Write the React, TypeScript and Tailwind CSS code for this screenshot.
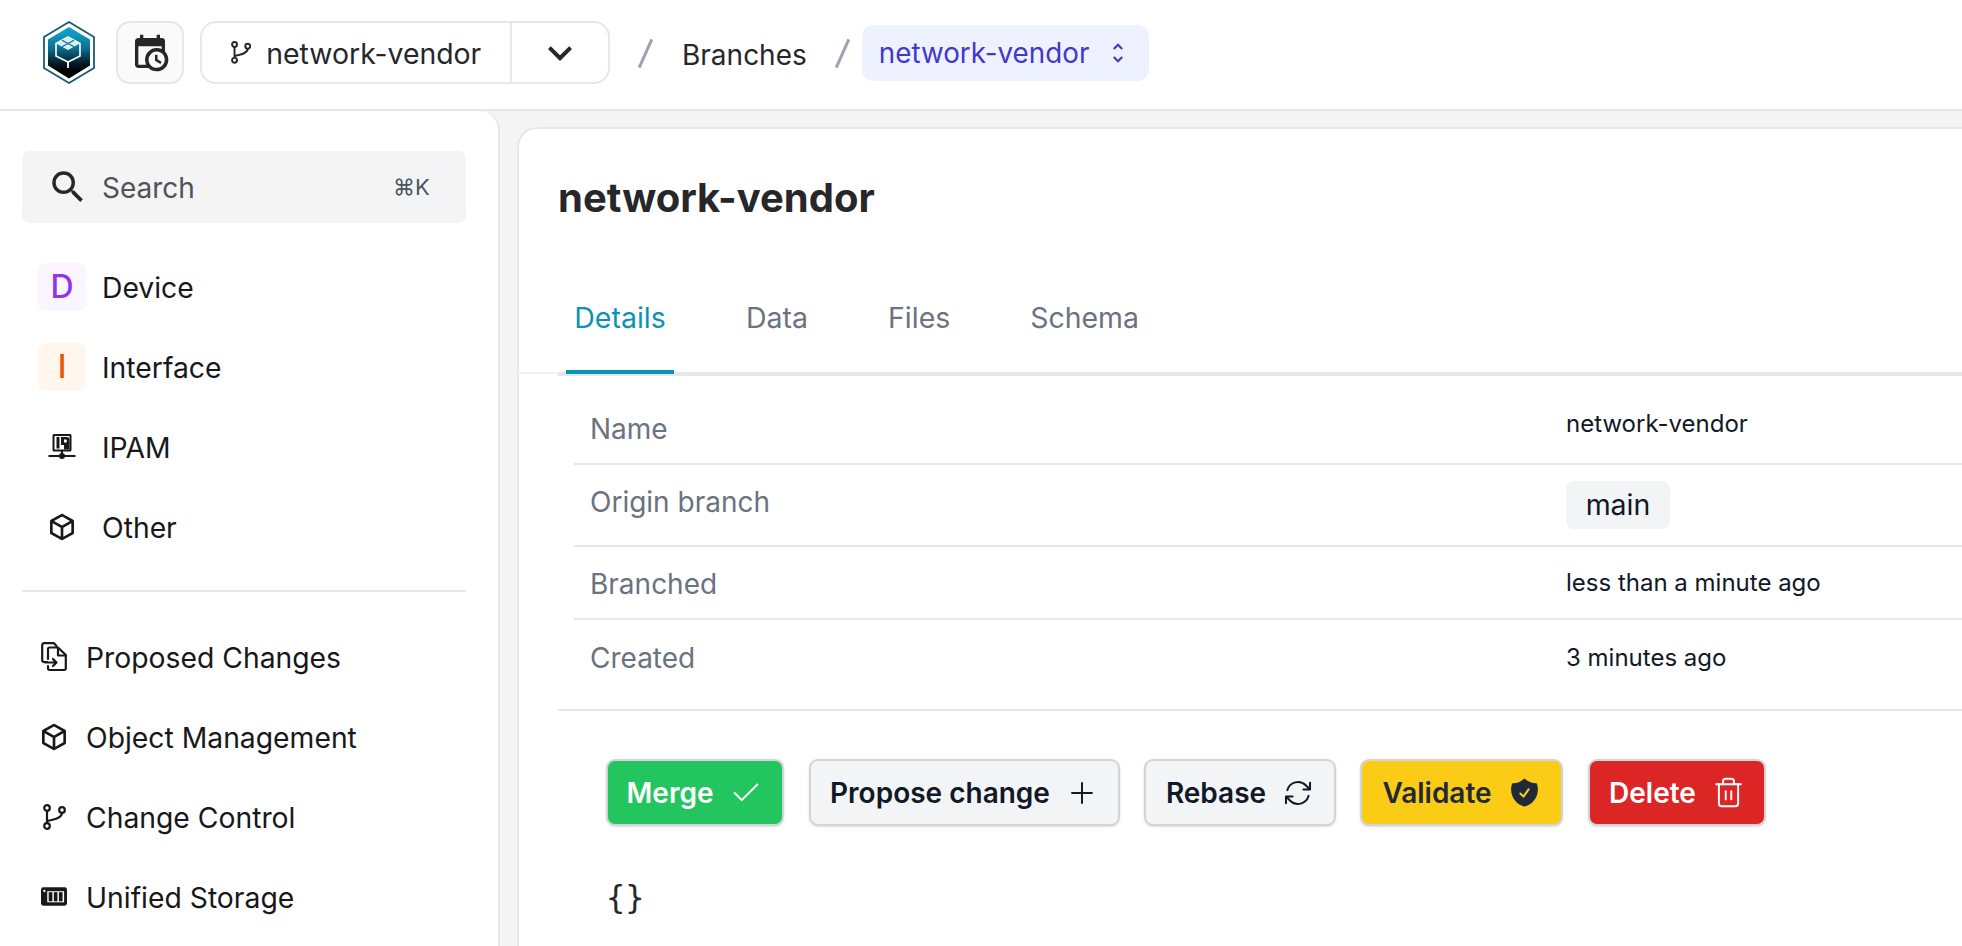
import { Check, Plus, Trash2 } from "lucide-react";
import { HiOutlineArrowPath, HiShieldCheck } from "react-icons/hi2";

const INTER = "font-['Inter','Noto_Sans',sans-serif]";

function Mdi({ d, size, className }: { d: string; size: number; className?: string }) {
  return (
    <svg viewBox="0 0 24 24" width={size} height={size} fill="currentColor" className={className}>
      <path d={d} />
    </svg>
  );
}

const CUBE =
  "M21,16.5C21,16.88 20.79,17.21 20.47,17.38L12.57,21.82C12.41,21.94 12.21,22 12,22C11.79,22 11.59,21.94 11.43,21.82L3.53,17.38C3.21,17.21 3,16.88 3,16.5V7.5C3,7.12 3.21,6.79 3.53,6.62L11.43,2.18C11.59,2.06 11.79,2 12,2C12.21,2 12.41,2.06 12.57,2.18L20.47,6.62C20.79,6.79 21,7.12 21,7.5V16.5M12,4.15L6.04,7.5L12,10.85L17.96,7.5L12,4.15M5,15.91L11,19.29V12.58L5,9.21V15.91M19,15.91V9.21L13,12.58V19.29L19,15.91Z";
const CALENDAR_CLOCK =
  "M15,13H16.5V15.82L18.94,17.23L18.19,18.53L15,16.69V13M19,8H5V19H9.67C9.24,18.09 9,17.07 9,16A7,7 0 0,1 16,9C17.07,9 18.09,9.24 19,9.67V8M5,21C3.89,21 3,20.1 3,19V5C3,3.89 3.89,3 5,3H6V1H8V3H16V1H18V3H19A2,2 0 0,1 21,5V11.1C22.24,12.36 23,14.09 23,16A7,7 0 0,1 16,23C14.09,23 12.36,22.24 11.1,21H5M16,11.15A4.85,4.85 0 0,0 11.15,16C11.15,18.68 13.32,20.85 16,20.85A4.85,4.85 0 0,0 20.85,16C20.85,13.32 18.68,11.15 16,11.15Z";
const MAGNIFY =
  "M9.5,3A6.5,6.5 0 0,1 16,9.5C16,11.11 15.41,12.59 14.44,13.73L14.71,14H15.5L20.5,19L19,20.5L14,15.5V14.71L13.73,14.44C12.59,15.41 11.11,16 9.5,16A6.5,6.5 0 0,1 3,9.5A6.5,6.5 0 0,1 9.5,3M9.5,5C7,5 5,7 5,9.5C5,12 7,14 9.5,14C12,14 14,12 14,9.5C14,7 12,5 9.5,5Z";
const UNFOLD =
  "M12,18.17L8.83,15L7.42,16.41L12,21L16.59,16.41L15.17,15M12,5.83L15.17,9L16.58,7.59L12,3L7.41,7.59L8.83,9L12,5.83Z";
const CHEVRON = "M7.41,8.58L12,13.17L16.59,8.58L18,10L12,16L6,10L7.41,8.58Z";

function Logo() {
  return (
    <svg viewBox="0 0 52 63" width={52} height={63}>
      <defs>
        <linearGradient id="hexfill" x1="0" y1="0" x2="0" y2="1">
          <stop offset="0.12" stopColor="#0f9cc2" />
          <stop offset="0.42" stopColor="#0b6f8e" />
          <stop offset="0.68" stopColor="#08222e" />
          <stop offset="0.85" stopColor="#000000" />
        </linearGradient>
      </defs>
      <path d="M26 1 L51 16 V47 L26 62 L1 47 V16 Z" fill="#fff" stroke="#1c5a70" strokeWidth="1.8" />
      <path d="M26 6 L47 18.5 V44.5 L26 57.5 L5 44.5 V18.5 Z" fill="url(#hexfill)" />
      <path d="M25 16 L37 22.5 V35 L25 41 L13 35 V22.5 Z" fill="none" stroke="#fff" strokeWidth="1.6" strokeLinejoin="round" />
      <path d="M25 16 L37 22.5 L25 29 L13 22.5 Z" fill="#d8eef5" />
      <path d="M19 19.2 L31 25.7 M31 19.2 L19 25.7" stroke="#0b6f8e" strokeWidth="1.2" />
      <path d="M25 41 V47" stroke="#fff" strokeWidth="1.8" />
    </svg>
  );
}

function BranchIcon({ scale = 1 }: { scale?: number }) {
  return (
    <svg viewBox="0 0 23 26" width={23 * scale} height={26 * scale} fill="none" stroke="currentColor" strokeWidth="2.2">
      <circle cx="4" cy="4" r="2.8" />
      <circle cx="4" cy="22" r="2.8" />
      <circle cx="19" cy="6" r="2.8" />
      <path d="M4 6.8 V19.2" />
      <path d="M19 8.8 C19 13.5 13 15.2 4 17" />
    </svg>
  );
}

function IpamIcon() {
  return (
    <svg viewBox="0 0 28 28" width={28} height={28} fill="#18181b">
      <path fillRule="evenodd" d="M6 1 H22 A1.5 1.5 0 0 1 23.5 2.5 V17 A1.5 1.5 0 0 1 22 18.5 H6 A1.5 1.5 0 0 1 4.5 17 V2.5 A1.5 1.5 0 0 1 6 1 Z M6.5 3 V16.5 H21.5 V3 Z" />
      <rect x="8.5" y="4" width="3" height="11.5" />
      <path fillRule="evenodd" d="M13 4 H18.5 A3 3 0 0 1 21.5 7 V16.5 H16 V12 H13 Z M16 6.4 V9.6 H18 A0.8 0.8 0 0 0 18.8 8.8 V7.2 A0.8 0.8 0 0 0 18 6.4 Z" />
      <rect x="13" y="18" width="2" height="4" />
      <rect x="0.5" y="22" width="27" height="2" />
      <circle cx="14" cy="23" r="3" />
    </svg>
  );
}

function ProposedIcon() {
  return (
    <svg viewBox="0 0 26 30" width={26} height={30} fill="none" stroke="#18181b" strokeWidth="2.2" strokeLinejoin="round" strokeLinecap="round">
      <path d="M6 20 H3 A2 2 0 0 1 1.2 18 V3 A2 2 0 0 1 3 1.2 H13 L15.5 4" />
      <path d="M7 17 V7 A1.5 1.5 0 0 1 8.5 5.5 H17 L24.8 13 V26.5 A1.5 1.5 0 0 1 23.3 28 H8.5 A1.5 1.5 0 0 1 7 26.5 V24" />
      <path d="M17 6 V13.5 H24.5" />
      <path d="M4 20.5 H15 M12 17 L15.5 20.5 L12 24" />
    </svg>
  );
}

function StorageIcon() {
  return (
    <svg viewBox="0 0 27 20" width={27} height={20}>
      <rect x="0" y="0" width="27" height="19" rx="2.5" fill="#18181b" />
      <rect x="6.5" y="4" width="17.5" height="11.5" fill="#fff" />
      <rect x="8" y="5" width="3.8" height="9.5" fill="#18181b" />
      <rect x="13.3" y="5" width="3.8" height="9.5" fill="#18181b" />
      <rect x="18.6" y="5" width="3.8" height="9.5" fill="#18181b" />
      <circle cx="3.5" cy="3.8" r="1.2" fill="#fff" />
    </svg>
  );
}

function NavRow({ icon, label, iconBox }: { icon: React.ReactNode; label: string; iconBox: string }) {
  return (
    <div className="flex h-[80px] items-center">
      <div className={`flex shrink-0 items-center justify-center ${iconBox}`}>{icon}</div>
      <span className="pt-[2px] text-[28.3px] text-[#18181b]">{label}</span>
    </div>
  );
}

const ROWS = [
  { label: "Name", labelTop: "pt-[39px]", valueTop: "pt-[34px]", height: "h-[89px]", value: "network-vendor" },
  { label: "Origin branch", labelTop: "pt-[23px]", valueTop: "pt-[16px]", height: "h-[82px]", value: null },
  { label: "Branched", labelTop: "pt-[23px]", valueTop: "pt-[22px]", height: "h-[73px]", value: "less than a minute ago" },
  { label: "Created", labelTop: "pt-[24px]", valueTop: "pt-[24px]", height: "h-[89px]", value: "3 minutes ago" },
];

export default function App() {
  return (
    <div className={`flex h-[946px] w-[1962px] flex-col overflow-hidden bg-[#f4f4f5] ${INTER}`}>
      <header className="flex h-[111px] shrink-0 items-start border-b-2 border-[#e5e7eb] bg-white pl-[43px]">
        <div className="mt-[21px]"><Logo /></div>
        <button className="mt-[21px] ml-[21px] flex h-[63px] w-[68px] items-center justify-center rounded-[14px] border-2 border-[#e5e7eb] bg-[#fafafa] text-[#27272a]">
          <Mdi d={CALENDAR_CLOCK} size={40} />
        </button>
        <div className="mt-[21px] ml-[16px] flex h-[63px] w-[410px] rounded-[16px] border-2 border-[#e5e7eb] bg-white">
          <div className="flex w-[310px] items-center border-r-2 border-[#e5e7eb] pl-[29px] text-[#27272a]">
            <BranchIcon scale={0.88} />
            <span className="ml-[15px] pt-[3px] text-[28.4px]">network-vendor</span>
          </div>
          <div className="flex flex-1 items-center justify-center text-[#27272a]">
            <Mdi d={CHEVRON} size={48} />
          </div>
        </div>
        <span className="mt-[38px] ml-[34px] block h-[31px] w-[3px] rotate-[24deg] bg-[#9ca3af]" />
        <span className="mt-[34px] ml-[35px] text-[28px] text-[#27272a]">Branches</span>
        <span className="mt-[38px] ml-[34px] block h-[31px] w-[3px] rotate-[24deg] bg-[#9ca3af]" />
        <div className="mt-[25px] ml-[18px] flex h-[56px] w-[287px] items-center rounded-[12px] bg-[#eef2ff] pl-[17px] text-[#4338ca]">
          <span className="pt-[2px] text-[27.8px]">network-vendor</span>
          <Mdi d={UNFOLD} size={26} className="ml-[16px]" />
        </div>
      </header>

      <div className="flex min-h-0 flex-1">
        <aside className="w-[500px] shrink-0 rounded-tr-[20px] border-r-2 border-[#e5e7eb] bg-white pl-[22px] pr-[32px]">
          <div className="mt-[40px] flex h-[72px] w-[444px] items-center rounded-[8px] bg-[#f4f4f5] pl-[25px] text-[#3f3f46]">
            <Mdi d={MAGNIFY} size={42} className="text-[#27272a]" />
            <span className="ml-[13px] pt-[2px] text-[28px] text-[#52525b]">Search</span>
            <span className="ml-auto mr-[23px] flex h-[40px] w-[63px] items-center justify-center rounded-[6px] bg-[#f3f4f6] text-[22px] text-[#4b5563]">⌘K</span>
          </div>
          <div className="pt-[24px]">
            <NavRow
              iconBox="ml-[16px] mr-[16px] h-[48px] w-[48px] rounded-[8px] bg-[#faf5ff]"
              icon={<span className="text-[32px] font-medium text-[#9333ea]">D</span>}
              label="Device"
            />
            <NavRow
              iconBox="ml-[16px] mr-[16px] h-[48px] w-[48px] rounded-[8px] bg-[#fff7ed]"
              icon={<span className="text-[32px] font-medium text-[#ea580c]">I</span>}
              label="Interface"
            />
            <NavRow iconBox="ml-[16px] mr-[16px] w-[48px]" icon={<IpamIcon />} label="IPAM" />
            <NavRow iconBox="ml-[16px] mr-[16px] w-[48px] text-[#18181b]" icon={<Mdi d={CUBE} size={32} />} label="Other" />
          </div>
          <div className="mt-[23px] h-[2px] w-[444px] bg-[#e5e7eb]" />
          <div className="mt-[25px]">
            <NavRow iconBox="ml-[19px] mr-[19px] w-[26px]" icon={<ProposedIcon />} label="Proposed Changes" />
            <NavRow iconBox="ml-[16px] mr-[16px] w-[32px] text-[#18181b]" icon={<Mdi d={CUBE} size={32} />} label="Object Management" />
            <NavRow iconBox="ml-[16px] mr-[16px] w-[32px] text-[#18181b]" icon={<BranchIcon />} label="Change Control" />
            <NavRow iconBox="ml-[19px] mr-[19px] w-[26px]" icon={<StorageIcon />} label="Unified Storage" />
          </div>
        </aside>

        <div className="min-w-0 flex-1 pt-[16px] pl-[17px]">
          <main className="h-full rounded-tl-[20px] border-t-2 border-l-2 border-[#e5e7eb] bg-white">
            <h1 className="pt-[46px] pl-[39px] text-[40px] leading-[46px] font-bold text-[#27272a]">network-vendor</h1>

            <div className="mt-[68px] h-[85px] border-b-2 border-[#eef0f2]">
              <nav className="ml-[39px] flex h-[87px] border-b-[4px] border-[#e5e7eb] pl-[8px]">
                <div className="relative z-10 -mb-[2px] flex w-[108px] justify-center border-b-[4px] border-[#0b93b6] pt-[8px] text-[28.5px] text-[#0b93b6]">Details</div>
                <div className="ml-[72px] pt-[8px] text-[28.5px] text-[#6b7280]">Data</div>
                <div className="ml-[80px] pt-[8px] text-[28.5px] text-[#6b7280]">Files</div>
                <div className="ml-[80px] pt-[8px] text-[28.4px] text-[#6b7280]">Schema</div>
              </nav>
            </div>

            <div className="mt-[2px] ml-[39px] border-b-2 border-[#e5e7eb]">
              {ROWS.map((r, i) => (
                <div key={r.label} className={`ml-[16px] grid grid-cols-[992px_1fr] ${r.height} ${i < ROWS.length - 1 ? "border-b-2 border-[#e5e7eb]" : ""}`}>
                  <div className={`pl-[16px] text-[28px] leading-[28px] text-[#6b7280] ${r.labelTop}`}>{r.label}</div>
                  <div className={`text-[24px] leading-[28px] text-[#111827] ${r.valueTop}`}>
                    {r.value ?? (
                      <span className="inline-flex h-[48px] w-[104px] items-center justify-center rounded-[8px] bg-[#f3f4f6] text-[28.5px]">main</span>
                    )}
                  </div>
                </div>
              ))}
            </div>

            <div className="mt-[48px] ml-[87px] flex text-[28px] font-semibold">
              <button className="flex h-[67px] w-[178px] items-center justify-center gap-[16px] rounded-[9px] border-2 border-[#d1d5db] bg-[#22c55e] text-white shadow-sm">
                Merge <Check size={34} strokeWidth={1.4} />
              </button>
              <button className="ml-[25px] flex h-[67px] w-[311px] items-center justify-center gap-[15px] rounded-[9px] border-2 border-[#d1d5db] bg-[#f3f4f6] text-[#111827] shadow-sm">
                Propose change <Plus size={34} strokeWidth={1.4} />
              </button>
              <button className="ml-[24px] flex h-[67px] w-[192px] items-center justify-center gap-[16px] rounded-[9px] border-2 border-[#d1d5db] bg-[#f3f4f6] text-[#111827] shadow-sm">
                Rebase <HiOutlineArrowPath size={32} />
              </button>
              <button className="ml-[24px] flex h-[67px] w-[203px] items-center justify-center gap-[16px] rounded-[9px] border-2 border-[#d1d5db] bg-[#facc15] text-[#1f2937] shadow-sm">
                Validate <HiShieldCheck size={33} />
              </button>
              <button className="ml-[25px] flex h-[67px] w-[178px] items-center justify-center gap-[16px] rounded-[9px] border-2 border-[#d1d5db] bg-[#dc2626] text-white shadow-sm">
                Delete <Trash2 size={33} strokeWidth={1.4} />
              </button>
            </div>

            <pre className="mt-[50px] ml-[87px] font-['DejaVu_Sans_Mono','Liberation_Mono',monospace] text-[32px] leading-[42px] text-[#27272a]">{"{}"}</pre>
          </main>
        </div>
      </div>
    </div>
  );
}
